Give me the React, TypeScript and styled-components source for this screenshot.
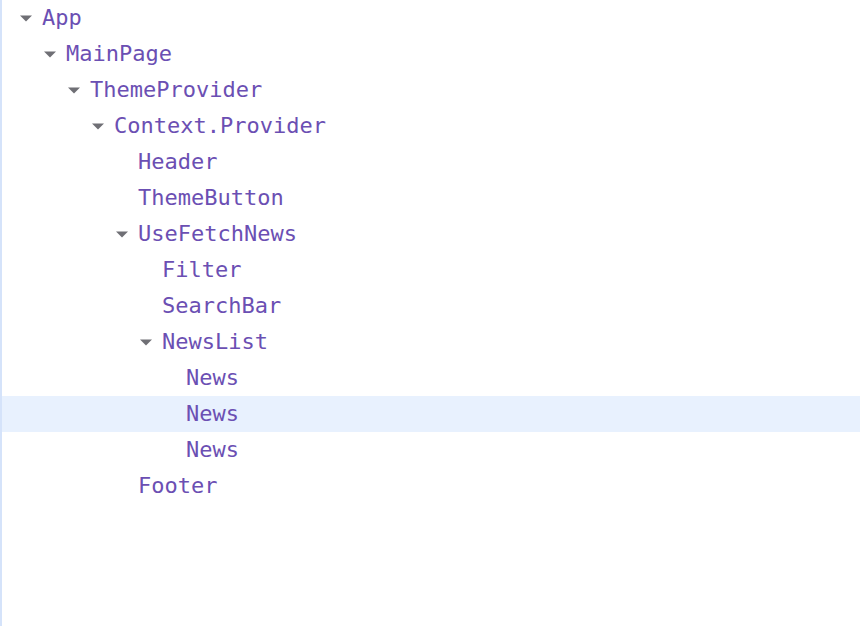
import React from "react";
import styled, { createGlobalStyle } from "styled-components";

const Global = createGlobalStyle`
  html, body { margin: 0; padding: 0; background: #ffffff; }
  body { width: 860px; height: 626px; overflow: hidden; }
`;

const Panel = styled.div`
  width: 858px;
  height: 626px;
  border-left: 2px solid #d5e3fa;
  background: #ffffff;
  font-family: "DejaVu Sans Mono", "Liberation Mono", monospace;
  font-size: 22px;
`;

const Row = styled.div<{ $depth: number; $selected?: boolean }>`
  height: 36px;
  display: flex;
  align-items: center;
  padding-left: ${(p) => 17 + p.$depth * 24}px;
  background: ${(p) => (p.$selected ? "#e8f1fe" : "transparent")};
`;

const Toggle = styled.span<{ $visible: boolean }>`
  width: 23px;
  flex: none;
  display: flex;
  align-items: center;
  visibility: ${(p) => (p.$visible ? "visible" : "hidden")};
`;

const Name = styled.span`
  color: #6b4fb3;
  white-space: pre;
  line-height: 36px;
`;

const Arrow = () => (
  <svg width="14" height="7" viewBox="0 0 14 7">
    <path d="M1 0.5 L13 0.5 L7 6.5 Z" fill="#6f6f75" />
  </svg>
);

const items: { name: string; depth: number; open?: boolean; selected?: boolean }[] = [
  { name: "App", depth: 0, open: true },
  { name: "MainPage", depth: 1, open: true },
  { name: "ThemeProvider", depth: 2, open: true },
  { name: "Context.Provider", depth: 3, open: true },
  { name: "Header", depth: 4 },
  { name: "ThemeButton", depth: 4 },
  { name: "UseFetchNews", depth: 4, open: true },
  { name: "Filter", depth: 5 },
  { name: "SearchBar", depth: 5 },
  { name: "NewsList", depth: 5, open: true },
  { name: "News", depth: 6 },
  { name: "News", depth: 6, selected: true },
  { name: "News", depth: 6 },
  { name: "Footer", depth: 4 },
];

export default function App() {
  return (
    <>
      <Global />
      <Panel>
        {items.map((it, i) => (
          <Row key={i} $depth={it.depth} $selected={it.selected}>
            <Toggle $visible={!!it.open}>
              <Arrow />
            </Toggle>
            <Name>{it.name}</Name>
          </Row>
        ))}
      </Panel>
    </>
  );
}
